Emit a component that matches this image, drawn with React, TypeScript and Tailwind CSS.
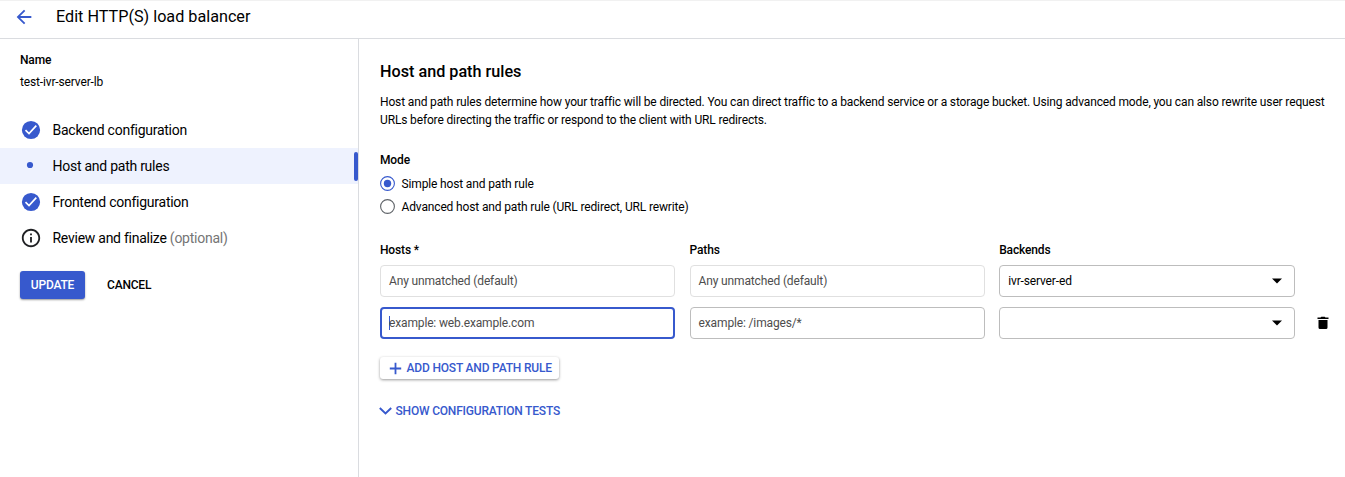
import React from "react";

const steps = [
  { label: "Backend configuration", state: "done" },
  { label: "Host and path rules", state: "active" },
  { label: "Frontend configuration", state: "done" },
  { label: "Review and finalize", state: "info", hint: "(optional)" },
];

function StepIcon({ state }: { state: string }) {
  if (state === "active")
    return (
      <svg className="size-[22px]" viewBox="0 0 22 22">
        <circle cx="10" cy="10" r="3.1" fill="#3759cd" />
      </svg>
    );
  if (state === "info")
    return (
      <svg className="size-[22px]" viewBox="0 0 24 24" fill="#202124">
        <path d="M11 7h2v2h-2zm0 4h2v6h-2zm1-9C6.480 2 2 6.480 2 12s4.480 10 10 10 10-4.480 10-10S17.520 2 12 2zm0 18c-4.410 0-8-3.590-8-8s3.590-8 8-8 8 3.590 8 8-3.590 8-8 8z" />
      </svg>
    );
  return (
    <svg className="size-[22px]" viewBox="0 0 22 22">
      <circle cx="11" cy="11" r="9.1" fill="#3759cd" />
      <path d="M5.500 11.200L9 14.600L16.300 6.700" fill="none" stroke="#fff" strokeWidth="1.700" />
    </svg>
  );
}

function Radio({ checked, label }: { checked?: boolean; label: string }) {
  return (
    <div className="flex h-[23px] items-center gap-[6.500px]">
      <svg className="size-[15px]" viewBox="0 0 15 15" fill="none">
        <circle cx="7.5" cy="7.5" r="6.9" stroke={checked ? "#3759cd" : "#5f6368"} strokeWidth="1.100" />
        {checked && <circle cx="7.5" cy="7.5" r="3.7" fill="#3759cd" />}
      </svg>
      <span>{label}</span>
    </div>
  );
}

function Select({ value }: { value?: string }) {
  return (
    <div className="flex h-8 w-[296px] items-center justify-between rounded-[4px] border border-[#bdbdbd] pr-[12px] pl-2">
      <span>{value}</span>
      <svg className="h-[6px] w-[10px]" viewBox="0 0 10 6">
        <path d="M0 .5h10L5 5.500z" fill="#000" />
      </svg>
    </div>
  );
}

export default function App() {
  return (
    <div className="flex h-[477px] w-[1345px] flex-col overflow-hidden bg-white font-[Roboto,sans-serif] text-[12px] leading-[18px] tracking-[-0.145px] text-black">
      <header className="flex h-[39px] shrink-0 items-center gap-[21px] border-t border-b border-t-[#f1f1f1] border-b-[#dadce0] pb-[5px] pl-[13px]">
        <svg className="size-[22px]" viewBox="0 0 24 24" fill="#3759cd">
          <path d="M20 11H7.830l5.590-5.590L12 4l-8 8 8 8 1.410-1.410L7.830 13H20v-2z" />
        </svg>
        <h1 className="text-[16.200px] leading-6 tracking-normal">Edit HTTP(S) load balancer</h1>
      </header>
      <div className="flex min-h-0 flex-1">
        <aside className="w-[359px] shrink-0 border-r border-[#dadce0] pt-3">
          <div className="pl-5 font-medium">Name</div>
          <div className="mt-1 pl-5">test-ivr-server-lb</div>
          <nav className="mt-[21px]">
            {steps.map((s) => (
              <div
                key={s.label}
                className={
                  s.state === "active"
                    ? "flex h-9 items-center gap-[10.500px] bg-[#eef2fe] pl-5"
                    : "flex h-9 items-center gap-[10.500px] pl-5"
                }
              >
                <StepIcon state={s.state} />
                <span className="text-[14px] tracking-[-0.255px]">
                  {s.label} {s.hint && <span className="text-[#757575]">{s.hint}</span>}
                </span>
                {s.state === "active" && <span className="ml-auto h-[29px] w-1 rounded-[2px] bg-[#3759cd]" />}
              </div>
            ))}
          </nav>
          <div className="mt-[15px] flex pl-5 font-medium tracking-[-0.200px]">
            <button className="h-7 w-[65px] rounded-[3px] bg-[#3759cd] text-white shadow-[0_1px_2px_rgba(0,0,0,0.4)]">UPDATE</button>
            <button className="ml-[22px] h-7">CANCEL</button>
          </div>
        </aside>
        <main className="min-w-0 flex-1 pt-[21px] pl-[21px]">
          <h2 className="text-[16.200px] leading-6 font-medium tracking-normal">Host and path rules</h2>
          <p className="mt-[9px] whitespace-nowrap">
            Host and path rules determine how your traffic will be directed. You can direct traffic to a backend service or a storage bucket. Using advanced mode, you can also rewrite user request
            <br />
            URLs before directing the traffic or respond to the client with URL redirects.
          </p>
          <div className="mt-[22px] mb-[3px] font-medium">Mode</div>
          <Radio checked label="Simple host and path rule" />
          <Radio label="Advanced host and path rule (URL redirect, URL rewrite)" />
          <div className="mt-[23px] grid grid-cols-[295px_295px_296px_20px] gap-x-[14.600px] gap-y-[10px]">
            <div className="-mb-[4px] font-medium">Hosts *</div>
            <div className="-mb-[4px] font-medium">Paths</div>
            <div className="col-span-2 -mb-[4px] font-medium">Backends</div>
            <div className="flex h-8 items-center rounded-[4px] border border-[#e0e0e0] pl-2 text-[#4d4d4d]">Any unmatched (default)</div>
            <div className="flex h-8 items-center rounded-[4px] border border-[#e0e0e0] pl-2 text-[#4d4d4d]">Any unmatched (default)</div>
            <div className="col-span-2"><Select value="ivr-server-ed" /></div>
            <div className="flex h-8 items-center rounded-[4px] border-2 border-[#3759cd] pl-[7px] text-[#4d4d4d]">
              <span className="-mr-px h-[14px] w-px bg-[#3759cd]" />
              example: web.example.com
            </div>
            <div className="flex h-8 items-center rounded-[4px] border border-[#bdbdbd] pl-2 text-[#4d4d4d]">example: /images/*</div>
            <Select />
            <svg className="mt-2 ml-[5px] size-4" viewBox="0 0 16 16" fill="#000">
              <path d="M3.500 5h9v7.500q0 1.500-1.500 1.500H5q-1.500 0-1.500-1.500zM2.500 2.500H5.500L6.300 1.800H9.700L10.500 2.500h3v1.500h-11z" />
            </svg>
          </div>
          <button className="mt-[18px] flex h-[22px] w-[179px] items-center rounded-[3px] pl-[9px] font-medium tracking-[-0.190px] whitespace-nowrap text-[#3759cd] shadow-[0_1px_3px_rgba(0,0,0,0.4)]">
            <svg className="mr-[4.600px] size-[13px]" viewBox="0 0 13 13" fill="none" stroke="#3759cd" strokeWidth="1.800">
              <path d="M6.500 .8v11.400M.8 6.500h11.400" />
            </svg>
            ADD HOST AND PATH RULE
          </button>
          <button className="mt-[23px] -ml-[1.500px] flex items-center font-medium tracking-[-0.190px] text-[#3759cd]">
            <svg className="mr-1 h-[8px] w-[13px]" viewBox="0 0 13 8" fill="none" stroke="#3759cd" strokeWidth="1.900">
              <path d="M.8 1L6.500 6.500 12.200 1" />
            </svg>
            SHOW CONFIGURATION TESTS
          </button>
        </main>
      </div>
    </div>
  );
}
